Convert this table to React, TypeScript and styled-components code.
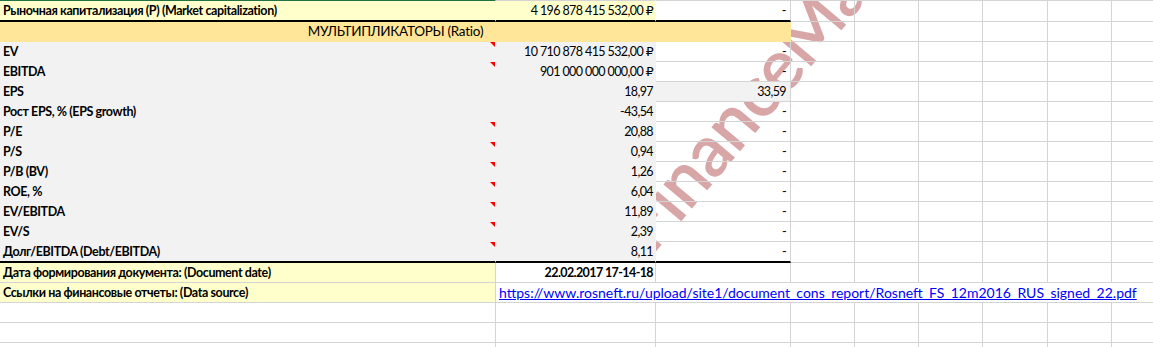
import React from 'react';
import styled, { createGlobalStyle } from 'styled-components';

const GRID = '#D4D4D4';
const GRAY = '#F2F2F2';
const YELLOW = '#FFFFCC';
const HEADER = '#FFE699';

const GlobalStyle = createGlobalStyle`
  html, body {
    margin: 0;
    padding: 0;
    background: #ffffff;
  }
  body {
    font-family: Lato, 'DejaVu Sans', sans-serif;
    font-size: 12.5px;
    color: #000;
    overflow: hidden;
  }
`;

const ratios = [
  { label: 'EV', value: '10 710 878 415 532,00 ₽', extra: '-', note: true },
  { label: 'EBITDA', value: '901 000 000 000,00 ₽', extra: '-', note: true },
  { label: 'EPS', value: '18,97', extra: '33,59', shaded: true },
  { label: 'Рост EPS, % (EPS growth)', value: '-43,54', extra: '-' },
  { label: 'P/E', value: '20,88', extra: '-', note: true },
  { label: 'P/S', value: '0,94', extra: '-', note: true },
  { label: 'P/B (BV)', value: '1,26', extra: '-', note: true },
  { label: 'ROE, %', value: '6,04', extra: '-', note: true },
  { label: 'EV/EBITDA', value: '11,89', extra: '-', note: true },
  { label: 'EV/S', value: '2,39', extra: '-', note: true },
  { label: 'Долг/EBITDA (Debt/EBITDA)', value: '8,11', extra: '-', note: true },
];

const LINK =
  'https://www.rosneft.ru/upload/site1/document_cons_report/Rosneft_FS_12m2016_RUS_signed_22.pdf';

const Blanks: React.FC<{ count: number; h?: number; top?: boolean }> = ({ count, h, top }) => (
  <>
    {Array.from({ length: count }).map((_, i) => (
      <Cell key={i} $h={h} $top={top ? `1px solid ${GRID}` : undefined} />
    ))}
  </>
);

const App: React.FC = () => {
  return (
    <>
      <GlobalStyle />
      <Sheet>
        <Watermark width="1153" height="347">
          <text
            x="652"
            y="255"
            transform="rotate(-50 652 255)"
            fontFamily="Lato, 'DejaVu Sans', sans-serif"
            fontSize="71"
            fill="#D8A6A6"
            stroke="#D8A6A6"
            strokeWidth="1.4"
          >
            FinanceMarker.ru
          </text>
        </Watermark>
        <Grid>
          {/* market cap */}
          <Cell $h={22} $bg={YELLOW} $right={YELLOW} $top="1px solid #217346" $bottom="2px solid #000" $bold>
            Рыночная капитализация (Р) (Market capitalization)
          </Cell>
          <Cell $h={22} $bg={YELLOW} $right={YELLOW} $top={`1px solid ${GRID}`} $bottom="2px solid #000" $align="right" $num>
            4 196 878 415 532,00 ₽
          </Cell>
          <Cell $h={22} $top={`1px solid ${GRID}`} $bottom="2px solid #000" $align="right" $pr={4}>
            -
          </Cell>
          <Blanks count={6} h={22} top />

          {/* section header */}
          <Cell $span="1 / 4" $bg={HEADER} $right={HEADER} $bottom={`1px solid ${HEADER}`} $align="center" $size={13.5}>
            МУЛЬТИПЛИКАТОРЫ (Ratio)
          </Cell>
          <Blanks count={6} />

          {ratios.map((r, i) => {
            const last = i === ratios.length - 1;
            const h = last ? 21 : 20;
            const bottom = last ? '2px solid #000' : undefined;
            return (
              <React.Fragment key={r.label}>
                <Cell $h={h} $bg={GRAY} $right={GRAY} $bottom={bottom ?? `1px solid ${GRAY}`} $bold $note={r.note}>
                  {r.label}
                </Cell>
                <Cell $h={h} $bg={GRAY} $right={GRAY} $bottom={bottom ?? `1px solid ${GRAY}`} $align="right" $num>
                  {r.value}
                </Cell>
                <Cell $h={h} $bg={r.shaded ? GRAY : undefined} $bottom={bottom} $align="right" $pr={4} $num>
                  {r.extra}
                </Cell>
                <Blanks count={6} h={h} />
              </React.Fragment>
            );
          })}

          {/* footer */}
          <Cell $bg={YELLOW} $bold>
            Дата формирования документа: (Document date)
          </Cell>
          <Cell $align="right" $bold $num>
            22.02.2017 17-14-18
          </Cell>
          <Blanks count={7} />

          <Cell $bg={YELLOW} $bold>
            Ссылки на финансовые отчеты: (Data source)
          </Cell>
          <Cell $span="2 / -1" $right="transparent">
            <Link href="#">{LINK}</Link>
          </Cell>

          <Blanks count={9} />
          <Blanks count={9} />
          <Blanks count={9} />
        </Grid>
      </Sheet>
    </>
  );
};

export default App;

const Sheet = styled.div`
  position: relative;
  width: 1153px;
  height: 347px;
  overflow: hidden;
`;

const Watermark = styled.svg`
  position: absolute;
  left: 0;
  top: 0;
  z-index: 0;
  pointer-events: none;
`;

const Grid = styled.div`
  position: relative;
  z-index: 1;
  display: grid;
  grid-template-columns: 496px 160px 135px 64px 64px 64px 65px 64px 64px;
  width: 1176px;
`;

interface CellProps {
  $h?: number;
  $bg?: string;
  $right?: string;
  $bottom?: string;
  $top?: string;
  $align?: 'left' | 'right' | 'center';
  $bold?: boolean;
  $span?: string;
  $note?: boolean;
  $pr?: number;
  $size?: number;
  $num?: boolean;
}

const justify = { left: 'flex-start', right: 'flex-end', center: 'center' };

const Cell = styled.div<CellProps>`
  position: relative;
  box-sizing: border-box;
  height: ${({ $h }) => $h ?? 20}px;
  grid-column: ${({ $span }) => $span ?? 'auto'};
  background: ${({ $bg }) => $bg ?? 'transparent'};
  border-top: ${({ $top }) => $top ?? 'none'};
  border-right: 1px solid ${({ $right }) => $right ?? GRID};
  border-bottom: ${({ $bottom }) => $bottom ?? `1px solid ${GRID}`};
  display: flex;
  align-items: flex-end;
  justify-content: ${({ $align }) => justify[$align ?? 'left']};
  padding: 0 ${({ $pr }) => $pr ?? 2}px 2px 3px;
  font-size: ${({ $size }) => $size ?? 12.5}px;
  font-weight: ${({ $bold }) => ($bold ? 700 : 400)};
  letter-spacing: ${({ $num, $size }) => ($num ? -0.6 : $size ? -0.3 : -0.4)}px;
  line-height: 15px;
  white-space: nowrap;

  &::after {
    content: '';
    display: ${({ $note }) => ($note ? 'block' : 'none')};
    position: absolute;
    top: 0;
    right: 0;
    width: 0;
    height: 0;
    border-top: 5px solid #ff0000;
    border-left: 5px solid transparent;
  }
`;

const Link = styled.a`
  color: #0000ff;
  text-decoration: underline;
  font-family: Lato, 'DejaVu Sans', sans-serif;
  font-size: 14px;
  letter-spacing: 0;
`;
